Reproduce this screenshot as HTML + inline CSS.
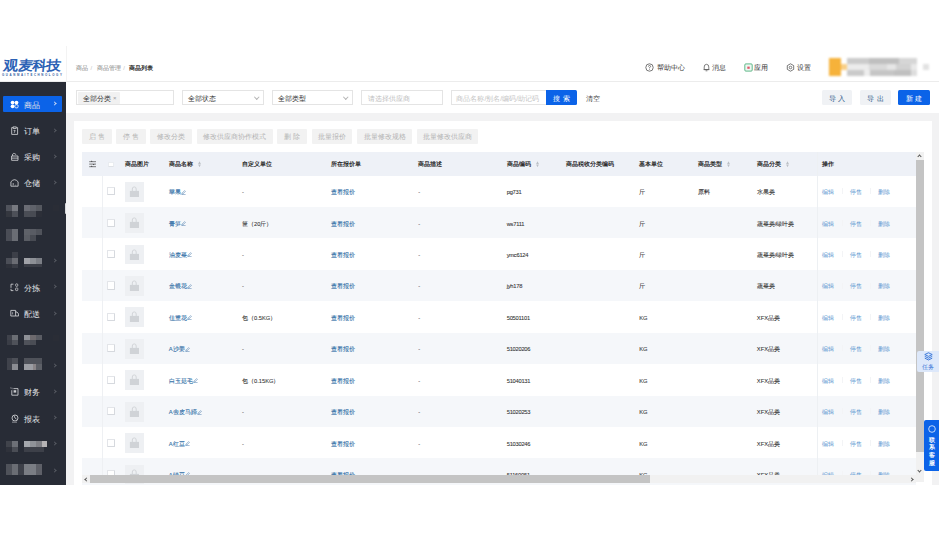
<!DOCTYPE html><html><head><meta charset="utf-8"><style>
*{box-sizing:border-box;margin:0;padding:0}
svg{display:block}
html,body{width:939px;height:538px;overflow:hidden;background:#fff;font-family:"Liberation Sans",sans-serif;color:#333}
.a{position:absolute;white-space:nowrap}
#header{position:absolute;left:0;top:46px;width:939px;height:36px;background:#fff;border-bottom:1px solid #ececec}
#side{position:absolute;left:0;top:82px;width:66px;height:402.5px;background:#282c36;overflow:hidden}
#main{position:absolute;left:66px;top:82px;width:873px;height:402.5px;background:#f2f2f3;overflow:hidden}
.mt{position:absolute;left:23.5px;font-size:7.9px;line-height:10px;color:#e6e7ea;font-weight:500}
.mar{position:absolute;left:53px;width:3px;height:3px;border-top:0.7px solid #585b63;border-right:0.7px solid #585b63;transform:rotate(45deg)}
.sel{position:absolute;height:15px;border:1px solid #e4e4e4;background:#fff;font-size:6.8px;line-height:15.8px;color:#333}
.chev{position:absolute;width:3.5px;height:3.5px;border-right:0.7px solid #b5b5b5;border-bottom:0.7px solid #b5b5b5;transform:rotate(45deg)}
.btn{position:absolute;top:128.5px;height:15.5px;background:#f2f2f2;color:#b3b3b3;font-size:6.9px;line-height:16.3px;text-align:center;border-radius:1px}
.th{position:absolute;font-size:5.72px;font-weight:bold;color:#1f1f1f;line-height:8px;white-space:nowrap}
.td{position:absolute;font-size:5.75px;color:#333;line-height:8px;white-space:nowrap;-webkit-text-stroke:0.08px #333}
.lk{color:#2f6ea6;-webkit-text-stroke:0.1px #2f6ea6}
.op{position:absolute;font-size:5.75px;line-height:8px;color:#5a96d0;white-space:nowrap}
.sort{position:absolute;width:2.8px;height:6px}
.sort:before{content:"";position:absolute;left:0;top:0;border-left:1.4px solid transparent;border-right:1.4px solid transparent;border-bottom:3px solid #c9ccd1}
.sort:after{content:"";position:absolute;left:0;bottom:0;border-left:1.4px solid transparent;border-right:1.4px solid transparent;border-top:3px solid #c9ccd1}
</style></head><body>
<div id="header">
<div class="a" style="left:65.5px;top:0;width:1px;height:36px;background:#f3f3f3"></div>
<div class="a" style="left:3px;top:11.9px;font-size:13.4px;line-height:15px;font-weight:bold;color:#2c62b5;transform:scaleX(1.1) skewX(-5deg);transform-origin:0 100%">观麦科技</div>
<div class="a" style="left:2px;top:28.1px;font-size:2.9px;line-height:3px;font-weight:bold;color:#2f5a9e;letter-spacing:1.6px">GUANMAITECHNOLOGY</div>
<div class="a" style="left:76px;top:17.5px;font-size:5.9px;line-height:8px;color:#7c7c7c;font-weight:500">商品<span style="color:#c4c4c4;margin:0 4.4px 0 2.6px">/</span>商品管理<span style="color:#c4c4c4;margin:0 4.4px 0 2.6px">/</span><span style="color:#262626;font-weight:bold">商品列表</span></div>
<svg class="a" style="left:644.5px;top:17px" width="9" height="9" viewBox="0 0 9 9"><circle cx="4.5" cy="4.5" r="3.7" fill="none" stroke="#555" stroke-width="0.8"/><path d="M3.4 3.6 Q3.4 2.5 4.5 2.5 Q5.6 2.5 5.6 3.5 Q5.6 4.2 4.5 4.6 L4.5 5.3" fill="none" stroke="#555" stroke-width="0.75"/><circle cx="4.5" cy="6.5" r="0.45" fill="#555"/></svg>
<div class="a" style="left:657px;top:17px;font-size:6.8px;line-height:9px;color:#303030;font-weight:500">帮助中心</div>
<svg class="a" style="left:702.5px;top:17px" width="7" height="9" viewBox="0 0 7 9"><path d="M1.2 6.6 L1.2 4 Q1.2 1.3 3.5 1.3 Q5.8 1.3 5.8 4 L5.8 6.6 Z M0.6 6.6 L6.4 6.6 M2.6 7.8 L4.4 7.8" fill="none" stroke="#555" stroke-width="0.75"/></svg>
<div class="a" style="left:712px;top:17px;font-size:6.8px;line-height:9px;color:#303030;font-weight:500">消息</div>
<svg class="a" style="left:744px;top:17px" width="9" height="9" viewBox="0 0 9 9"><rect x="0.8" y="0.9" width="7.4" height="7.2" rx="1" fill="#eef8f2" stroke="#3aa76d" stroke-width="0.8"/><rect x="3.3" y="3.6" width="2.4" height="2.2" fill="#e0556a"/></svg>
<div class="a" style="left:754.3px;top:17px;font-size:6.8px;line-height:9px;color:#303030;font-weight:500">应用</div>
<svg class="a" style="left:785.5px;top:16.8px" width="9" height="9" viewBox="0 0 9 9"><path d="M4.5 0.8 L7.7 2.6 L7.7 6.4 L4.5 8.2 L1.3 6.4 L1.3 2.6 Z" fill="none" stroke="#555" stroke-width="0.8"/><circle cx="4.5" cy="4.5" r="1.3" fill="none" stroke="#555" stroke-width="0.75"/></svg>
<div class="a" style="left:796.7px;top:17px;font-size:6.8px;line-height:9px;color:#303030;font-weight:500">设置</div>
<div class="a" style="left:0;top:0;width:939px;height:36px;filter:blur(0.9px)">
<div class="a" style="left:828.9px;top:11.700000000000003px;width:12px;height:18.3px;background:#f6b23a"></div>
<div class="a" style="left:840.9px;top:18px;width:5.7px;height:6px;background:#f9cf86"></div>
<div class="a" style="left:846.6px;top:11.700000000000003px;width:22.8px;height:6.3px;background:#cbcbcb"></div>
<div class="a" style="left:869.4px;top:11.700000000000003px;width:29.8px;height:6.3px;background:#bfbfbf"></div>
<div class="a" style="left:899.2px;top:11.700000000000003px;width:17.8px;height:6.3px;background:#d6d6d6"></div>
<div class="a" style="left:846.6px;top:18px;width:22.8px;height:6px;background:#ececec"></div>
<div class="a" style="left:869.4px;top:18px;width:17.7px;height:6px;background:#dadada"></div>
<div class="a" style="left:887.1px;top:18px;width:8.9px;height:6px;background:#e6e6e6"></div>
<div class="a" style="left:896px;top:18px;width:15.2px;height:6px;background:#d2d2d2"></div>
<div class="a" style="left:911.2px;top:18px;width:5.8px;height:6px;background:#e9e9e9"></div>
<div class="a" style="left:846.6px;top:24px;width:17.1px;height:6px;background:#cacaca"></div>
<div class="a" style="left:863.7px;top:24px;width:6.3px;height:6px;background:#ededed"></div>
<div class="a" style="left:870px;top:24px;width:23.5px;height:6px;background:#c5c5c5"></div>
<div class="a" style="left:893.5px;top:24px;width:17.7px;height:6px;background:#c0c0c0"></div>
<div class="a" style="left:911.2px;top:24px;width:5.8px;height:6px;background:#dddddd"></div>
<div class="a" style="left:922.7px;top:18px;width:6px;height:5.7px;background:#e2e2e2"></div>
</div>
</div>
<div id="side">
<div class="a" style="left:3px;top:14px;width:59.3px;height:16px;background:#0b63e8;border-radius:1px"></div>
<div class="a" style="left:9.6px;top:17.70px;width:9px;height:9px"><svg width="9" height="9" viewBox="0 0 9 9"><circle cx="2.6" cy="2.6" r="1.9" fill="#fff"/><circle cx="6.5" cy="2.6" r="1.9" fill="#fff"/><circle cx="2.6" cy="6.3" r="1.9" fill="#fff"/><rect x="4.9" y="4.7" width="3.2" height="3.2" rx="1.1" fill="none" stroke="#fff" stroke-width="0.8"/></svg></div>
<div class="mt" style="top:18.70px">商品</div>
<div class="mar" style="top:20.40px;border-color:#c9d8f5"></div>
<div class="a" style="left:9.6px;top:43.85px;width:9px;height:9px"><svg width="9" height="9" viewBox="0 0 9 9"><path d="M3 1.6 L1.7 1.6 L1.7 8.4 L7.6 8.4 L7.6 1.6 L6.3 1.6" fill="none" stroke="#dcdde0" stroke-width="0.8"/><rect x="3.2" y="0.9" width="2.9" height="1.5" fill="none" stroke="#dcdde0" stroke-width="0.75"/><path d="M3.6 4.4 L5.2 4.4 L4.2 6.8" fill="none" stroke="#dcdde0" stroke-width="0.75"/></svg></div>
<div class="mt" style="top:44.85px">订单</div>
<div class="mar" style="top:46.55px;border-color:#585b63"></div>
<div class="a" style="left:9.6px;top:70.00px;width:9px;height:9px"><svg width="9" height="9" viewBox="0 0 9 9"><path d="M1.6 4 L8 4 L8 8.3 L1.6 8.3 Z M1.6 6.1 L8 6.1 M2.6 4 L2.6 2.2 Q3.4 1 4.6 1.6 L6.2 2.6" fill="none" stroke="#dcdde0" stroke-width="0.8"/></svg></div>
<div class="mt" style="top:71.00px">采购</div>
<div class="mar" style="top:72.70px;border-color:#585b63"></div>
<div class="a" style="left:9.6px;top:96.15px;width:9px;height:9px"><svg width="9" height="9" viewBox="0 0 9 9"><path d="M0.9 8.2 L0.9 3.8 Q4.5 -0.4 8.1 3.8 L8.1 8.2 Z" fill="none" stroke="#dcdde0" stroke-width="0.8"/><path d="M3.2 5 L3.2 7.4" stroke="#dcdde0" stroke-width="0.7"/><circle cx="5.3" cy="7.1" r="0.45" fill="#dcdde0"/></svg></div>
<div class="mt" style="top:97.15px">仓储</div>
<div class="mar" style="top:98.85px;border-color:#585b63"></div>
<div class="a" style="left:9.6px;top:200.75px;width:9px;height:9px"><svg width="9" height="9" viewBox="0 0 9 9"><path d="M3.4 1.2 L1 1.2 L1 4.8 M1 5.8 L1 7.6 L3.4 7.6" fill="none" stroke="#dcdde0" stroke-width="0.8"/><rect x="5.6" y="0.8" width="2.2" height="2.6" rx="1" fill="none" stroke="#dcdde0" stroke-width="0.7"/><rect x="5.6" y="5" width="2.2" height="2.6" rx="0.6" fill="none" stroke="#dcdde0" stroke-width="0.7"/></svg></div>
<div class="mt" style="top:201.75px">分拣</div>
<div class="mar" style="top:203.45px;border-color:#585b63"></div>
<div class="a" style="left:9.6px;top:226.90px;width:9px;height:9px"><svg width="9" height="9" viewBox="0 0 9 9"><path d="M0.8 1.4 L5.6 1.4 L5.6 7 L0.8 7 Z M5.6 3 L7 3 L8.6 5 L8.6 7 L5.6 7" fill="none" stroke="#dcdde0" stroke-width="0.8"/><path d="M2.6 3.2 L2.6 5.4" stroke="#dcdde0" stroke-width="0.6"/></svg></div>
<div class="mt" style="top:227.90px">配送</div>
<div class="mar" style="top:229.60px;border-color:#585b63"></div>
<div class="a" style="left:9.6px;top:305.35px;width:9px;height:9px"><svg width="9" height="9" viewBox="0 0 9 9"><path d="M1.8 3.2 L1.8 8.2 L8 8.2 L8 1.6 L3.4 1.6" fill="none" stroke="#dcdde0" stroke-width="0.8"/><rect x="3.6" y="3.2" width="2.6" height="2.4" fill="#c9cace"/><path d="M-0.5 0.6 L3 1.8" stroke="#5a5d66" stroke-width="1.6"/></svg></div>
<div class="mt" style="top:306.35px">财务</div>
<div class="mar" style="top:308.05px;border-color:#585b63"></div>
<div class="a" style="left:9.6px;top:331.50px;width:9px;height:9px"><svg width="9" height="9" viewBox="0 0 9 9"><circle cx="5" cy="4" r="3" fill="none" stroke="#dcdde0" stroke-width="0.8"/><path d="M4 1.6 L5 4 L6.6 5.2" fill="none" stroke="#dcdde0" stroke-width="0.75"/><rect x="2" y="7.4" width="5" height="1.6" fill="#6a6d75"/></svg></div>
<div class="mt" style="top:332.50px">报表</div>
<div class="mar" style="top:334.20px;border-color:#585b63"></div>
<div class="a" style="left:0;top:0;width:66px;height:403px;filter:blur(0.7px)">
<div class="a" style="left:6px;top:122.70px;width:6px;height:6px;background:#50535c"></div>
<div class="a" style="left:12px;top:122.70px;width:6px;height:6px;background:#777980"></div>
<div class="a" style="left:6px;top:128.70px;width:6px;height:6px;background:#34373f"></div>
<div class="a" style="left:12px;top:128.70px;width:6px;height:6px;background:#4d5058"></div>
<div class="a" style="left:24px;top:122.70px;width:6px;height:6px;background:#6a6c74"></div>
<div class="a" style="left:30px;top:122.70px;width:6px;height:6px;background:#5f626a"></div>
<div class="a" style="left:36px;top:122.70px;width:5.5px;height:6px;background:#55585f"></div>
<div class="a" style="left:24px;top:128.70px;width:6px;height:6px;background:#4a4d55"></div>
<div class="a" style="left:30px;top:128.70px;width:6px;height:6px;background:#484b53"></div>
<div class="a" style="left:36px;top:128.70px;width:5.5px;height:6px;background:#2c2f38"></div>
<div class="a" style="left:53px;top:122.70px;width:6px;height:6px;background:#2a2d36"></div>
<div class="a" style="left:6px;top:146.80px;width:6px;height:12px;background:#4a4d56"></div>
<div class="a" style="left:12px;top:146.80px;width:6px;height:12px;background:#6a6d74"></div>
<div class="a" style="left:24px;top:146.80px;width:6px;height:6px;background:#5e6168"></div>
<div class="a" style="left:30px;top:146.80px;width:6px;height:6px;background:#595c64"></div>
<div class="a" style="left:36px;top:146.80px;width:5.5px;height:6px;background:#50535b"></div>
<div class="a" style="left:24px;top:152.80px;width:6px;height:6px;background:#5a5d64"></div>
<div class="a" style="left:30px;top:152.80px;width:6px;height:6px;background:#484b53"></div>
<div class="a" style="left:12px;top:170.20px;width:6px;height:6px;background:#3c3f48"></div>
<div class="a" style="left:6px;top:176.20px;width:6px;height:6px;background:#4b4e57"></div>
<div class="a" style="left:12px;top:176.20px;width:6px;height:6px;background:#6a6c73"></div>
<div class="a" style="left:6px;top:182.20px;width:6px;height:4px;background:#2e313a"></div>
<div class="a" style="left:12px;top:182.20px;width:6px;height:4px;background:#3a3d46"></div>
<div class="a" style="left:24px;top:176.20px;width:6px;height:6px;background:#a0a2a8"></div>
<div class="a" style="left:30px;top:176.20px;width:6px;height:6px;background:#8d9096"></div>
<div class="a" style="left:36px;top:176.20px;width:5.5px;height:6px;background:#7b7e85"></div>
<div class="a" style="left:24px;top:182.20px;width:17.5px;height:3px;background:#3a3d46"></div>
<div class="a" style="left:6.5px;top:253.00px;width:5.5px;height:5px;background:#3f424b"></div>
<div class="a" style="left:12px;top:253.00px;width:6px;height:5px;background:#6b6e74"></div>
<div class="a" style="left:6.5px;top:258.00px;width:5.5px;height:5.2px;background:#3a3d46"></div>
<div class="a" style="left:12px;top:258.00px;width:6px;height:5.2px;background:#4f525a"></div>
<div class="a" style="left:24px;top:253.00px;width:6px;height:5px;background:#8e9096"></div>
<div class="a" style="left:30px;top:253.00px;width:6px;height:5px;background:#6d6a6e"></div>
<div class="a" style="left:36px;top:253.00px;width:6px;height:5px;background:#5a5c63"></div>
<div class="a" style="left:24px;top:258.00px;width:6px;height:5.2px;background:#4f525a"></div>
<div class="a" style="left:30px;top:258.00px;width:6px;height:5.2px;background:#4a4d55"></div>
<div class="a" style="left:53px;top:253.00px;width:6px;height:6px;background:#2a2d36"></div>
<div class="a" style="left:6.5px;top:276.20px;width:5.5px;height:6px;background:#3f424b"></div>
<div class="a" style="left:12px;top:276.20px;width:6px;height:6px;background:#4d5058"></div>
<div class="a" style="left:6.5px;top:282.20px;width:5.5px;height:5.6px;background:#3f424b"></div>
<div class="a" style="left:12px;top:282.20px;width:6px;height:5.6px;background:#8a8c92"></div>
<div class="a" style="left:24px;top:276.20px;width:18px;height:6px;background:#4f525a"></div>
<div class="a" style="left:24px;top:282.20px;width:9px;height:5.6px;background:#9c9ea4"></div>
<div class="a" style="left:33px;top:282.20px;width:3px;height:5.6px;background:#8a8588"></div>
<div class="a" style="left:36px;top:282.20px;width:6px;height:5.6px;background:#5d6067"></div>
<div class="a" style="left:6px;top:359.20px;width:6px;height:5.5px;background:#40434b"></div>
<div class="a" style="left:12px;top:359.20px;width:6px;height:5.5px;background:#6d7077"></div>
<div class="a" style="left:6px;top:364.70px;width:6px;height:5.6px;background:#2f323b"></div>
<div class="a" style="left:12px;top:364.70px;width:6px;height:5.6px;background:#4a4d55"></div>
<div class="a" style="left:24px;top:359.20px;width:6px;height:5.5px;background:#a5a8ae"></div>
<div class="a" style="left:30px;top:359.20px;width:6px;height:5.5px;background:#8f9298"></div>
<div class="a" style="left:36px;top:359.20px;width:6px;height:5.5px;background:#7e7f85"></div>
<div class="a" style="left:42px;top:359.20px;width:5.3px;height:5.5px;background:#b5b3b5"></div>
<div class="a" style="left:24px;top:364.70px;width:20px;height:5.6px;background:#3d4049"></div>
<div class="a" style="left:6px;top:381.90px;width:6px;height:11px;background:#4f525a"></div>
<div class="a" style="left:12px;top:381.90px;width:6px;height:11px;background:#6a6d74"></div>
<div class="a" style="left:18px;top:381.90px;width:6px;height:11px;background:#3d4049"></div>
<div class="a" style="left:24px;top:381.90px;width:12px;height:11px;background:#7a7d84"></div>
<div class="a" style="left:36px;top:381.90px;width:6px;height:11px;background:#5e6068"></div>
</div>
<div class="mar" style="top:177.30px"></div>
<div class="mar" style="top:281.90px"></div>
<div class="mar" style="top:360.35px"></div>
<div class="mar" style="top:386.50px"></div>
</div>
<div class="a" style="left:65.3px;top:202.6px;width:2.5px;height:11.2px;background:#d9dadd;border-radius:1px"></div>
<div id="main">
<div class="a" style="left:0;top:0;width:873px;height:31px;background:#fff"></div>
<div class="sel" style="left:10.400000000000006px;top:8.299999999999997px;width:97.3px"><div class="a" style="left:1px;top:1px;width:41.4px;height:11.4px;background:#f1f1f1;border-radius:1px"></div><div class="a" style="left:5.3px;top:0;color:#333">全部分类</div><div class="a" style="left:35.5px;top:0;color:#999;font-size:6px">×</div></div>
<div class="sel" style="left:115.69999999999999px;top:8.299999999999997px;width:82px"><div class="a" style="left:5px;top:0">全部状态</div><div class="chev" style="left:72px;top:3.5px"></div></div>
<div class="sel" style="left:205.60000000000002px;top:8.299999999999997px;width:81.1px"><div class="a" style="left:5px;top:0">全部类型</div><div class="chev" style="left:71.5px;top:3.5px"></div></div>
<div class="sel" style="left:295px;top:8.400000000000006px;width:82px;color:#bdbdbd"><div class="a" style="left:5.8px;top:0">请选择供应商</div></div>
<div class="sel" style="left:384.6px;top:8.200000000000003px;width:96px;color:#c4c4c4;border-right:none"><div class="a" style="left:4.8px;top:0">商品名称/别名/编码/助记码</div></div>
<div class="a" style="left:480.29999999999995px;top:8.200000000000003px;width:30.7px;height:15.2px;background:#0b63e8;border-radius:0 1.5px 1.5px 0;color:#fff;font-weight:500;font-size:6.8px;line-height:17.2px;text-align:center;letter-spacing:2.6px;padding-left:2.6px">搜索</div>
<div class="a" style="left:519.5px;top:12.400000000000006px;font-size:6.8px;line-height:9px;color:#444">清空</div>
<div class="a" style="left:756.3px;top:8.299999999999997px;width:29.4px;height:15.2px;background:#f0f2f5;border-radius:1.5px;color:#2a5887;font-weight:500;font-size:6.8px;line-height:17.2px;text-align:center;letter-spacing:2.5px;padding-left:2.5px">导入</div>
<div class="a" style="left:794px;top:8.299999999999997px;width:30.9px;height:15.2px;background:#f0f2f5;border-radius:1.5px;color:#2a5887;font-weight:500;font-size:6.8px;line-height:17.2px;text-align:center;letter-spacing:2.5px;padding-left:2.5px">导出</div>
<div class="a" style="left:832.2px;top:8.299999999999997px;width:31.4px;height:15.2px;background:#0b63e8;border-radius:1.5px;color:#fff;font-weight:500;font-size:6.8px;line-height:17.2px;text-align:center;letter-spacing:2.5px;padding-left:2.5px">新建</div>
<div class="a" style="left:8.200000000000003px;top:38.900000000000006px;width:857.8px;height:400px;background:#fff"></div>
<div class="btn" style="left:15.900000000000006px;top:46.5px;width:29.9px">启&nbsp;售</div>
<div class="btn" style="left:49.900000000000006px;top:46.5px;width:30.2px">停&nbsp;售</div>
<div class="btn" style="left:84.19999999999999px;top:46.5px;width:42.1px">修改分类</div>
<div class="btn" style="left:130.5px;top:46.5px;width:76.2px">修改供应商协作模式</div>
<div class="btn" style="left:211px;top:46.5px;width:29.8px">删&nbsp;除</div>
<div class="btn" style="left:245.7px;top:46.5px;width:40.8px">批量报价</div>
<div class="btn" style="left:291.2px;top:46.5px;width:55.3px">批量修改规格</div>
<div class="btn" style="left:351.1px;top:46.5px;width:61.4px">批量修改供应商</div>
<div class="a" style="left:16px;top:69.6px;width:833.7px;height:24.0px;background:#eef1f7"></div>
<div class="a" style="left:16px;top:93.60px;width:833.7px;height:31.48px;background:#fff"></div>
<div class="a" style="left:16px;top:125.03px;width:833.7px;height:31.48px;background:#f5f7fa"></div>
<div class="a" style="left:16px;top:156.46px;width:833.7px;height:31.48px;background:#fff"></div>
<div class="a" style="left:16px;top:187.89px;width:833.7px;height:31.48px;background:#f5f7fa"></div>
<div class="a" style="left:16px;top:219.32px;width:833.7px;height:31.48px;background:#fff"></div>
<div class="a" style="left:16px;top:250.75px;width:833.7px;height:31.48px;background:#f5f7fa"></div>
<div class="a" style="left:16px;top:282.18px;width:833.7px;height:31.48px;background:#fff"></div>
<div class="a" style="left:16px;top:313.61px;width:833.7px;height:31.48px;background:#f5f7fa"></div>
<div class="a" style="left:16px;top:345.04px;width:833.7px;height:31.48px;background:#fff"></div>
<div class="a" style="left:16px;top:376.47px;width:833.7px;height:31.48px;background:#f5f7fa"></div>
<div class="a" style="left:35.599999999999994px;top:93.6px;width:0.6px;height:299.5px;background:#eef0f3"></div>
<div class="a" style="left:751px;top:69.6px;width:0.7px;height:323.5px;background:#edf0f3"></div>
<svg class="a" style="left:22.799999999999997px;top:77.6px" width="7.4" height="8" viewBox="0 0 7.4 8"><path d="M0.2 1.7 L7.2 1.7 M0.2 4.1 L7.2 4.1 M0.2 6.7 L7.2 6.7" stroke="#3a3a3a" stroke-width="0.65"/><path d="M1.9 1.7 L2.7 0.6 L3.5 1.7 Z M3.9 4.1 L4.7 5.2 L5.5 4.1 Z M1.9 6.7 L2.7 5.6 L3.5 6.7 Z" fill="#3a3a3a"/></svg>
<div class="a" style="left:41.8px;top:79.69999999999999px;width:6.3px;height:5.7px;background:#fff;border:0.5px solid #e9ecf0;border-bottom-color:#dfe2e7;border-radius:0.6px"></div>
<div class="th" style="left:58.599999999999994px;top:78.30px">商品图片</div>
<div class="th" style="left:102.5px;top:78.30px">商品名称</div>
<svg class="a" style="left:131.68px;top:78.90px" width="3" height="6.4" viewBox="0 0 3 6.4"><path d="M1.5 0.2 L2.9 2.9 L0.1 2.9 Z M0.1 3.5 L2.9 3.5 L1.5 6.2 Z" fill="#bcc0c6"/></svg>
<div class="th" style="left:176px;top:78.30px">自定义单位</div>
<div class="th" style="left:264.6px;top:78.30px">所在报价单</div>
<div class="th" style="left:352.2px;top:78.30px">商品描述</div>
<div class="th" style="left:440.5px;top:78.30px">商品编码</div>
<svg class="a" style="left:469.68px;top:78.90px" width="3" height="6.4" viewBox="0 0 3 6.4"><path d="M1.5 0.2 L2.9 2.9 L0.1 2.9 Z M0.1 3.5 L2.9 3.5 L1.5 6.2 Z" fill="#bcc0c6"/></svg>
<div class="th" style="left:500px;top:78.30px">商品税收分类编码</div>
<div class="th" style="left:573.2px;top:78.30px">基本单位</div>
<div class="th" style="left:632px;top:78.30px">商品类型</div>
<svg class="a" style="left:661.18px;top:78.90px" width="3" height="6.4" viewBox="0 0 3 6.4"><path d="M1.5 0.2 L2.9 2.9 L0.1 2.9 Z M0.1 3.5 L2.9 3.5 L1.5 6.2 Z" fill="#bcc0c6"/></svg>
<div class="th" style="left:690.8px;top:78.30px">商品分类</div>
<svg class="a" style="left:719.98px;top:78.90px" width="3" height="6.4" viewBox="0 0 3 6.4"><path d="M1.5 0.2 L2.9 2.9 L0.1 2.9 Z M0.1 3.5 L2.9 3.5 L1.5 6.2 Z" fill="#bcc0c6"/></svg>
<div class="th" style="left:756.2px;top:78.30px">操作</div>
<div class="a" style="left:40.599999999999994px;top:105.12px;width:8.2px;height:8.2px;background:#fff;border:0.6px solid #e3e5e9;border-right-color:#d6d9de;border-bottom-color:#d6d9de;border-radius:0.8px"></div>
<div class="a" style="left:58.7px;top:99.72px;width:19.6px;height:19.8px;background:#eef0f3"></div>
<svg class="a" style="left:63.19999999999999px;top:103.72px" width="10.5" height="11" viewBox="0 0 10.5 11"><path d="M3.3 5 L3.3 3 Q3.3 0.9 5.25 0.9 Q7.2 0.9 7.2 3 L7.2 5" fill="none" stroke="#d2d5d9" stroke-width="1"/><rect x="0.9" y="4.9" width="9.1" height="6.1" fill="#d0d3d7"/></svg>
<div class="td lk" style="left:102.80000000000001px;top:106.12px">苹果<svg style="display:inline-block;vertical-align:-0.5px;margin-left:0.6px" width="5" height="5" viewBox="0 0 5 5"><path d="M0.8 4.2 L1 3.2 L3.6 0.6 L4.4 1.4 L1.8 4 Z M0.5 4.6 L4.6 4.6" fill="none" stroke="#5a86b3" stroke-width="0.6"/></svg></div>
<div class="td" style="left:176px;top:106.12px">-</div>
<div class="td lk" style="left:264.6px;top:106.12px">查看报价</div>
<div class="td" style="left:352.2px;top:106.12px">-</div>
<div class="td" style="left:440.7px;top:106.12px;letter-spacing:-0.25px">pg731</div>
<div class="td" style="left:573.2px;top:106.12px">斤</div>
<div class="td" style="left:632px;top:106.12px">原料</div>
<div class="td" style="left:690.8px;top:106.12px">水果类</div>
<div class="op" style="left:755.9px;top:106.12px">编辑</div>
<div class="a" style="left:776px;top:106.315px;width:0.5px;height:6px;background:#f3f4f6"></div>
<div class="op" style="left:784px;top:106.12px">停售</div>
<div class="a" style="left:803.6px;top:106.315px;width:0.5px;height:6px;background:#f3f4f6"></div>
<div class="op" style="left:811.7px;top:106.12px">删除</div>
<div class="a" style="left:40.599999999999994px;top:136.55px;width:8.2px;height:8.2px;background:#fff;border:0.6px solid #e3e5e9;border-right-color:#d6d9de;border-bottom-color:#d6d9de;border-radius:0.8px"></div>
<div class="a" style="left:58.7px;top:131.15px;width:19.6px;height:19.8px;background:#eef0f3"></div>
<svg class="a" style="left:63.19999999999999px;top:135.15px" width="10.5" height="11" viewBox="0 0 10.5 11"><path d="M3.3 5 L3.3 3 Q3.3 0.9 5.25 0.9 Q7.2 0.9 7.2 3 L7.2 5" fill="none" stroke="#d2d5d9" stroke-width="1"/><rect x="0.9" y="4.9" width="9.1" height="6.1" fill="#d0d3d7"/></svg>
<div class="td lk" style="left:102.80000000000001px;top:137.55px">青笋<svg style="display:inline-block;vertical-align:-0.5px;margin-left:0.6px" width="5" height="5" viewBox="0 0 5 5"><path d="M0.8 4.2 L1 3.2 L3.6 0.6 L4.4 1.4 L1.8 4 Z M0.5 4.6 L4.6 4.6" fill="none" stroke="#5a86b3" stroke-width="0.6"/></svg></div>
<div class="td" style="left:176px;top:137.55px">筐（20斤）</div>
<div class="td lk" style="left:264.6px;top:137.55px">查看报价</div>
<div class="td" style="left:352.2px;top:137.55px">-</div>
<div class="td" style="left:440.7px;top:137.55px;letter-spacing:-0.25px">ws7111</div>
<div class="td" style="left:573.2px;top:137.55px">斤</div>
<div class="td" style="left:632px;top:137.55px"></div>
<div class="td" style="left:690.8px;top:137.55px">蔬菜类/绿叶类</div>
<div class="op" style="left:755.9px;top:137.55px">编辑</div>
<div class="a" style="left:776px;top:137.745px;width:0.5px;height:6px;background:#f3f4f6"></div>
<div class="op" style="left:784px;top:137.55px">停售</div>
<div class="a" style="left:803.6px;top:137.745px;width:0.5px;height:6px;background:#f3f4f6"></div>
<div class="op" style="left:811.7px;top:137.55px">删除</div>
<div class="a" style="left:40.599999999999994px;top:167.98px;width:8.2px;height:8.2px;background:#fff;border:0.6px solid #e3e5e9;border-right-color:#d6d9de;border-bottom-color:#d6d9de;border-radius:0.8px"></div>
<div class="a" style="left:58.7px;top:162.58px;width:19.6px;height:19.8px;background:#eef0f3"></div>
<svg class="a" style="left:63.19999999999999px;top:166.58px" width="10.5" height="11" viewBox="0 0 10.5 11"><path d="M3.3 5 L3.3 3 Q3.3 0.9 5.25 0.9 Q7.2 0.9 7.2 3 L7.2 5" fill="none" stroke="#d2d5d9" stroke-width="1"/><rect x="0.9" y="4.9" width="9.1" height="6.1" fill="#d0d3d7"/></svg>
<div class="td lk" style="left:102.80000000000001px;top:168.98px">油麦菜<svg style="display:inline-block;vertical-align:-0.5px;margin-left:0.6px" width="5" height="5" viewBox="0 0 5 5"><path d="M0.8 4.2 L1 3.2 L3.6 0.6 L4.4 1.4 L1.8 4 Z M0.5 4.6 L4.6 4.6" fill="none" stroke="#5a86b3" stroke-width="0.6"/></svg></div>
<div class="td" style="left:176px;top:168.98px">-</div>
<div class="td lk" style="left:264.6px;top:168.98px">查看报价</div>
<div class="td" style="left:352.2px;top:168.98px">-</div>
<div class="td" style="left:440.7px;top:168.98px;letter-spacing:-0.25px">ymc6124</div>
<div class="td" style="left:573.2px;top:168.98px">斤</div>
<div class="td" style="left:632px;top:168.98px"></div>
<div class="td" style="left:690.8px;top:168.98px">蔬菜类/绿叶类</div>
<div class="op" style="left:755.9px;top:168.98px">编辑</div>
<div class="a" style="left:776px;top:169.175px;width:0.5px;height:6px;background:#f3f4f6"></div>
<div class="op" style="left:784px;top:168.98px">停售</div>
<div class="a" style="left:803.6px;top:169.175px;width:0.5px;height:6px;background:#f3f4f6"></div>
<div class="op" style="left:811.7px;top:168.98px">删除</div>
<div class="a" style="left:40.599999999999994px;top:199.41px;width:8.2px;height:8.2px;background:#fff;border:0.6px solid #e3e5e9;border-right-color:#d6d9de;border-bottom-color:#d6d9de;border-radius:0.8px"></div>
<div class="a" style="left:58.7px;top:194.00px;width:19.6px;height:19.8px;background:#eef0f3"></div>
<svg class="a" style="left:63.19999999999999px;top:198.00px" width="10.5" height="11" viewBox="0 0 10.5 11"><path d="M3.3 5 L3.3 3 Q3.3 0.9 5.25 0.9 Q7.2 0.9 7.2 3 L7.2 5" fill="none" stroke="#d2d5d9" stroke-width="1"/><rect x="0.9" y="4.9" width="9.1" height="6.1" fill="#d0d3d7"/></svg>
<div class="td lk" style="left:102.80000000000001px;top:200.41px">金银花<svg style="display:inline-block;vertical-align:-0.5px;margin-left:0.6px" width="5" height="5" viewBox="0 0 5 5"><path d="M0.8 4.2 L1 3.2 L3.6 0.6 L4.4 1.4 L1.8 4 Z M0.5 4.6 L4.6 4.6" fill="none" stroke="#5a86b3" stroke-width="0.6"/></svg></div>
<div class="td" style="left:176px;top:200.41px">-</div>
<div class="td lk" style="left:264.6px;top:200.41px">查看报价</div>
<div class="td" style="left:352.2px;top:200.41px">-</div>
<div class="td" style="left:440.7px;top:200.41px;letter-spacing:-0.25px">jyh178</div>
<div class="td" style="left:573.2px;top:200.41px">斤</div>
<div class="td" style="left:632px;top:200.41px"></div>
<div class="td" style="left:690.8px;top:200.41px">蔬菜类</div>
<div class="op" style="left:755.9px;top:200.41px">编辑</div>
<div class="a" style="left:776px;top:200.60500000000002px;width:0.5px;height:6px;background:#f3f4f6"></div>
<div class="op" style="left:784px;top:200.41px">停售</div>
<div class="a" style="left:803.6px;top:200.60500000000002px;width:0.5px;height:6px;background:#f3f4f6"></div>
<div class="op" style="left:811.7px;top:200.41px">删除</div>
<div class="a" style="left:40.599999999999994px;top:230.83px;width:8.2px;height:8.2px;background:#fff;border:0.6px solid #e3e5e9;border-right-color:#d6d9de;border-bottom-color:#d6d9de;border-radius:0.8px"></div>
<div class="a" style="left:58.7px;top:225.43px;width:19.6px;height:19.8px;background:#eef0f3"></div>
<svg class="a" style="left:63.19999999999999px;top:229.43px" width="10.5" height="11" viewBox="0 0 10.5 11"><path d="M3.3 5 L3.3 3 Q3.3 0.9 5.25 0.9 Q7.2 0.9 7.2 3 L7.2 5" fill="none" stroke="#d2d5d9" stroke-width="1"/><rect x="0.9" y="4.9" width="9.1" height="6.1" fill="#d0d3d7"/></svg>
<div class="td lk" style="left:102.80000000000001px;top:231.83px">佳重花<svg style="display:inline-block;vertical-align:-0.5px;margin-left:0.6px" width="5" height="5" viewBox="0 0 5 5"><path d="M0.8 4.2 L1 3.2 L3.6 0.6 L4.4 1.4 L1.8 4 Z M0.5 4.6 L4.6 4.6" fill="none" stroke="#5a86b3" stroke-width="0.6"/></svg></div>
<div class="td" style="left:176px;top:231.83px">包（0.5KG）</div>
<div class="td lk" style="left:264.6px;top:231.83px">查看报价</div>
<div class="td" style="left:352.2px;top:231.83px">-</div>
<div class="td" style="left:440.7px;top:231.83px;letter-spacing:-0.25px">50501101</div>
<div class="td" style="left:573.2px;top:231.83px">KG</div>
<div class="td" style="left:632px;top:231.83px"></div>
<div class="td" style="left:690.8px;top:231.83px">XFX品类</div>
<div class="op" style="left:755.9px;top:231.83px">编辑</div>
<div class="a" style="left:776px;top:232.03499999999997px;width:0.5px;height:6px;background:#f3f4f6"></div>
<div class="op" style="left:784px;top:231.83px">停售</div>
<div class="a" style="left:803.6px;top:232.03499999999997px;width:0.5px;height:6px;background:#f3f4f6"></div>
<div class="op" style="left:811.7px;top:231.83px">删除</div>
<div class="a" style="left:40.599999999999994px;top:262.27px;width:8.2px;height:8.2px;background:#fff;border:0.6px solid #e3e5e9;border-right-color:#d6d9de;border-bottom-color:#d6d9de;border-radius:0.8px"></div>
<div class="a" style="left:58.7px;top:256.87px;width:19.6px;height:19.8px;background:#eef0f3"></div>
<svg class="a" style="left:63.19999999999999px;top:260.87px" width="10.5" height="11" viewBox="0 0 10.5 11"><path d="M3.3 5 L3.3 3 Q3.3 0.9 5.25 0.9 Q7.2 0.9 7.2 3 L7.2 5" fill="none" stroke="#d2d5d9" stroke-width="1"/><rect x="0.9" y="4.9" width="9.1" height="6.1" fill="#d0d3d7"/></svg>
<div class="td lk" style="left:102.80000000000001px;top:263.27px">A沙姜<svg style="display:inline-block;vertical-align:-0.5px;margin-left:0.6px" width="5" height="5" viewBox="0 0 5 5"><path d="M0.8 4.2 L1 3.2 L3.6 0.6 L4.4 1.4 L1.8 4 Z M0.5 4.6 L4.6 4.6" fill="none" stroke="#5a86b3" stroke-width="0.6"/></svg></div>
<div class="td" style="left:176px;top:263.27px">-</div>
<div class="td lk" style="left:264.6px;top:263.27px">查看报价</div>
<div class="td" style="left:352.2px;top:263.27px">-</div>
<div class="td" style="left:440.7px;top:263.27px;letter-spacing:-0.25px">51020206</div>
<div class="td" style="left:573.2px;top:263.27px">KG</div>
<div class="td" style="left:632px;top:263.27px"></div>
<div class="td" style="left:690.8px;top:263.27px">XFX品类</div>
<div class="op" style="left:755.9px;top:263.27px">编辑</div>
<div class="a" style="left:776px;top:263.46500000000003px;width:0.5px;height:6px;background:#f3f4f6"></div>
<div class="op" style="left:784px;top:263.27px">停售</div>
<div class="a" style="left:803.6px;top:263.46500000000003px;width:0.5px;height:6px;background:#f3f4f6"></div>
<div class="op" style="left:811.7px;top:263.27px">删除</div>
<div class="a" style="left:40.599999999999994px;top:293.69px;width:8.2px;height:8.2px;background:#fff;border:0.6px solid #e3e5e9;border-right-color:#d6d9de;border-bottom-color:#d6d9de;border-radius:0.8px"></div>
<div class="a" style="left:58.7px;top:288.29px;width:19.6px;height:19.8px;background:#eef0f3"></div>
<svg class="a" style="left:63.19999999999999px;top:292.29px" width="10.5" height="11" viewBox="0 0 10.5 11"><path d="M3.3 5 L3.3 3 Q3.3 0.9 5.25 0.9 Q7.2 0.9 7.2 3 L7.2 5" fill="none" stroke="#d2d5d9" stroke-width="1"/><rect x="0.9" y="4.9" width="9.1" height="6.1" fill="#d0d3d7"/></svg>
<div class="td lk" style="left:102.80000000000001px;top:294.69px">白玉菇毛<svg style="display:inline-block;vertical-align:-0.5px;margin-left:0.6px" width="5" height="5" viewBox="0 0 5 5"><path d="M0.8 4.2 L1 3.2 L3.6 0.6 L4.4 1.4 L1.8 4 Z M0.5 4.6 L4.6 4.6" fill="none" stroke="#5a86b3" stroke-width="0.6"/></svg></div>
<div class="td" style="left:176px;top:294.69px">包（0.15KG）</div>
<div class="td lk" style="left:264.6px;top:294.69px">查看报价</div>
<div class="td" style="left:352.2px;top:294.69px">-</div>
<div class="td" style="left:440.7px;top:294.69px;letter-spacing:-0.25px">51040131</div>
<div class="td" style="left:573.2px;top:294.69px">KG</div>
<div class="td" style="left:632px;top:294.69px"></div>
<div class="td" style="left:690.8px;top:294.69px">XFX品类</div>
<div class="op" style="left:755.9px;top:294.69px">编辑</div>
<div class="a" style="left:776px;top:294.895px;width:0.5px;height:6px;background:#f3f4f6"></div>
<div class="op" style="left:784px;top:294.69px">停售</div>
<div class="a" style="left:803.6px;top:294.895px;width:0.5px;height:6px;background:#f3f4f6"></div>
<div class="op" style="left:811.7px;top:294.69px">删除</div>
<div class="a" style="left:40.599999999999994px;top:325.12px;width:8.2px;height:8.2px;background:#fff;border:0.6px solid #e3e5e9;border-right-color:#d6d9de;border-bottom-color:#d6d9de;border-radius:0.8px"></div>
<div class="a" style="left:58.7px;top:319.72px;width:19.6px;height:19.8px;background:#eef0f3"></div>
<svg class="a" style="left:63.19999999999999px;top:323.72px" width="10.5" height="11" viewBox="0 0 10.5 11"><path d="M3.3 5 L3.3 3 Q3.3 0.9 5.25 0.9 Q7.2 0.9 7.2 3 L7.2 5" fill="none" stroke="#d2d5d9" stroke-width="1"/><rect x="0.9" y="4.9" width="9.1" height="6.1" fill="#d0d3d7"/></svg>
<div class="td lk" style="left:102.80000000000001px;top:326.12px">A去皮马蹄<svg style="display:inline-block;vertical-align:-0.5px;margin-left:0.6px" width="5" height="5" viewBox="0 0 5 5"><path d="M0.8 4.2 L1 3.2 L3.6 0.6 L4.4 1.4 L1.8 4 Z M0.5 4.6 L4.6 4.6" fill="none" stroke="#5a86b3" stroke-width="0.6"/></svg></div>
<div class="td" style="left:176px;top:326.12px">-</div>
<div class="td lk" style="left:264.6px;top:326.12px">查看报价</div>
<div class="td" style="left:352.2px;top:326.12px">-</div>
<div class="td" style="left:440.7px;top:326.12px;letter-spacing:-0.25px">51020253</div>
<div class="td" style="left:573.2px;top:326.12px">KG</div>
<div class="td" style="left:632px;top:326.12px"></div>
<div class="td" style="left:690.8px;top:326.12px">XFX品类</div>
<div class="op" style="left:755.9px;top:326.12px">编辑</div>
<div class="a" style="left:776px;top:326.325px;width:0.5px;height:6px;background:#f3f4f6"></div>
<div class="op" style="left:784px;top:326.12px">停售</div>
<div class="a" style="left:803.6px;top:326.325px;width:0.5px;height:6px;background:#f3f4f6"></div>
<div class="op" style="left:811.7px;top:326.12px">删除</div>
<div class="a" style="left:40.599999999999994px;top:356.56px;width:8.2px;height:8.2px;background:#fff;border:0.6px solid #e3e5e9;border-right-color:#d6d9de;border-bottom-color:#d6d9de;border-radius:0.8px"></div>
<div class="a" style="left:58.7px;top:351.15px;width:19.6px;height:19.8px;background:#eef0f3"></div>
<svg class="a" style="left:63.19999999999999px;top:355.15px" width="10.5" height="11" viewBox="0 0 10.5 11"><path d="M3.3 5 L3.3 3 Q3.3 0.9 5.25 0.9 Q7.2 0.9 7.2 3 L7.2 5" fill="none" stroke="#d2d5d9" stroke-width="1"/><rect x="0.9" y="4.9" width="9.1" height="6.1" fill="#d0d3d7"/></svg>
<div class="td lk" style="left:102.80000000000001px;top:357.56px">A红豆<svg style="display:inline-block;vertical-align:-0.5px;margin-left:0.6px" width="5" height="5" viewBox="0 0 5 5"><path d="M0.8 4.2 L1 3.2 L3.6 0.6 L4.4 1.4 L1.8 4 Z M0.5 4.6 L4.6 4.6" fill="none" stroke="#5a86b3" stroke-width="0.6"/></svg></div>
<div class="td" style="left:176px;top:357.56px">-</div>
<div class="td lk" style="left:264.6px;top:357.56px">查看报价</div>
<div class="td" style="left:352.2px;top:357.56px">-</div>
<div class="td" style="left:440.7px;top:357.56px;letter-spacing:-0.25px">51030246</div>
<div class="td" style="left:573.2px;top:357.56px">KG</div>
<div class="td" style="left:632px;top:357.56px"></div>
<div class="td" style="left:690.8px;top:357.56px">XFX品类</div>
<div class="op" style="left:755.9px;top:357.56px">编辑</div>
<div class="a" style="left:776px;top:357.755px;width:0.5px;height:6px;background:#f3f4f6"></div>
<div class="op" style="left:784px;top:357.56px">停售</div>
<div class="a" style="left:803.6px;top:357.755px;width:0.5px;height:6px;background:#f3f4f6"></div>
<div class="op" style="left:811.7px;top:357.56px">删除</div>
<div class="a" style="left:40.599999999999994px;top:387.98px;width:8.2px;height:8.2px;background:#fff;border:0.6px solid #e3e5e9;border-right-color:#d6d9de;border-bottom-color:#d6d9de;border-radius:0.8px"></div>
<div class="a" style="left:58.7px;top:382.58px;width:19.6px;height:19.8px;background:#eef0f3"></div>
<svg class="a" style="left:63.19999999999999px;top:386.58px" width="10.5" height="11" viewBox="0 0 10.5 11"><path d="M3.3 5 L3.3 3 Q3.3 0.9 5.25 0.9 Q7.2 0.9 7.2 3 L7.2 5" fill="none" stroke="#d2d5d9" stroke-width="1"/><rect x="0.9" y="4.9" width="9.1" height="6.1" fill="#d0d3d7"/></svg>
<div class="td lk" style="left:102.80000000000001px;top:388.98px">A绿豆<svg style="display:inline-block;vertical-align:-0.5px;margin-left:0.6px" width="5" height="5" viewBox="0 0 5 5"><path d="M0.8 4.2 L1 3.2 L3.6 0.6 L4.4 1.4 L1.8 4 Z M0.5 4.6 L4.6 4.6" fill="none" stroke="#5a86b3" stroke-width="0.6"/></svg></div>
<div class="td" style="left:176px;top:388.98px">-</div>
<div class="td lk" style="left:264.6px;top:388.98px">查看报价</div>
<div class="td" style="left:352.2px;top:388.98px">-</div>
<div class="td" style="left:440.7px;top:388.98px;letter-spacing:-0.25px">51160051</div>
<div class="td" style="left:573.2px;top:388.98px">KG</div>
<div class="td" style="left:632px;top:388.98px"></div>
<div class="td" style="left:690.8px;top:388.98px">XFX品类</div>
<div class="op" style="left:755.9px;top:388.98px">编辑</div>
<div class="a" style="left:776px;top:389.18499999999995px;width:0.5px;height:6px;background:#f3f4f6"></div>
<div class="op" style="left:784px;top:388.98px">停售</div>
<div class="a" style="left:803.6px;top:389.18499999999995px;width:0.5px;height:6px;background:#f3f4f6"></div>
<div class="op" style="left:811.7px;top:388.98px">删除</div>
<div class="a" style="left:16px;top:393.1px;width:833.7px;height:8.2px;background:#f1f1f1"></div>
<div class="a" style="left:23.799999999999997px;top:393.1px;width:560.0px;height:8.2px;background:#c4c4c4"></div>
<div class="a" style="left:18.599999999999994px;top:395.6px;width:3px;height:3px;border-left:0.9px solid #555;border-bottom:0.9px solid #555;transform:rotate(45deg)"></div>
<div class="a" style="left:844px;top:395.6px;width:3px;height:3px;border-right:0.9px solid #555;border-top:0.9px solid #555;transform:rotate(45deg)"></div>
<div class="a" style="left:849.7px;top:69.6px;width:8.1px;height:330.9px;background:#f1f1f1"></div>
<div class="a" style="left:849.7px;top:77.80000000000001px;width:8.1px;height:292.2px;background:#c4c4c4"></div>
<div class="a" style="left:852.3px;top:72.6px;width:3px;height:3px;border-left:0.9px solid #555;border-top:0.9px solid #555;transform:rotate(45deg)"></div>
<div class="a" style="left:852.3px;top:387.4px;width:3px;height:3px;border-right:0.9px solid #555;border-bottom:0.9px solid #555;transform:rotate(45deg)"></div>
</div>
<div class="a" style="left:916.8px;top:350.6px;width:30px;height:21.8px;background:#dde8fa;border-radius:2px"></div>
<svg class="a" style="left:923.6px;top:351.8px" width="9" height="9" viewBox="0 0 7 7"><path d="M3.5 0.6 L6.4 2 L3.5 3.4 L0.6 2 Z" fill="none" stroke="#2f6fd6" stroke-width="0.7"/><path d="M0.6 3.4 L3.5 4.8 L6.4 3.4 M0.6 4.8 L3.5 6.2 L6.4 4.8" fill="none" stroke="#2f6fd6" stroke-width="0.7"/></svg>
<div class="a" style="left:922.3px;top:363.2px;font-size:5.8px;line-height:8px;color:#2f6fd6">任务</div>
<div class="a" style="left:924px;top:420.4px;width:20px;height:50.3px;background:#0b63e8;border-radius:2px 0 0 2px"></div>
<svg class="a" style="left:928.4px;top:424.8px" width="8" height="8" viewBox="0 0 8 8"><circle cx="4" cy="4" r="3.3" fill="none" stroke="#fff" stroke-width="0.75"/><path d="M2.5 4 L2.6 4 M3.95 4 L4.05 4 M5.4 4 L5.5 4" stroke="#fff" stroke-width="0.6"/></svg>
<div class="a" style="left:929.3px;top:436.60px;font-size:6px;line-height:7px;font-weight:bold;color:#fff">联</div>
<div class="a" style="left:929.3px;top:444.30px;font-size:6px;line-height:7px;font-weight:bold;color:#fff">系</div>
<div class="a" style="left:929.3px;top:452.00px;font-size:6px;line-height:7px;font-weight:bold;color:#fff">客</div>
<div class="a" style="left:929.3px;top:459.70px;font-size:6px;line-height:7px;font-weight:bold;color:#fff">服</div>
</body></html>
